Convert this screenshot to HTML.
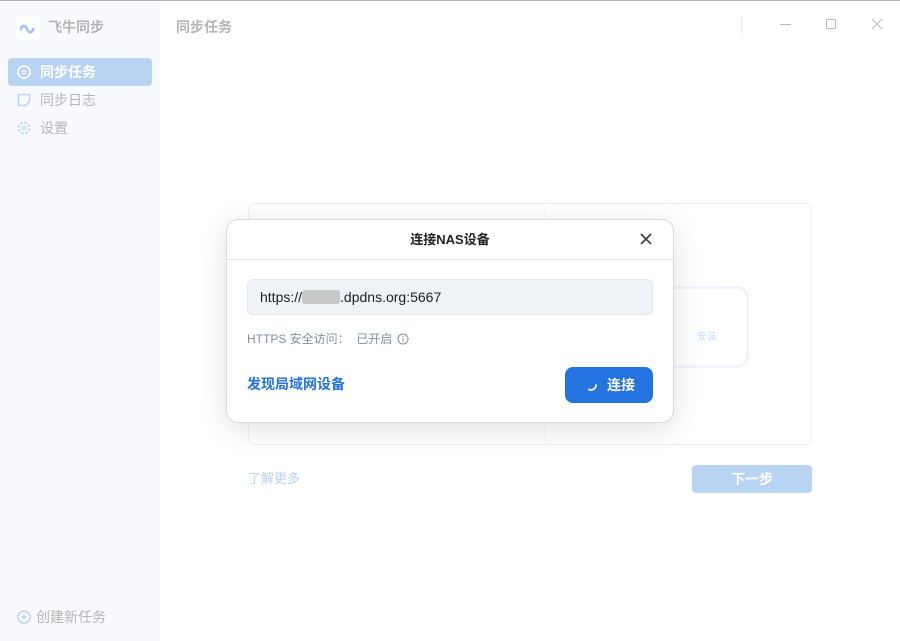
<!DOCTYPE html>
<html><head><meta charset="utf-8"><style>
*{box-sizing:border-box;margin:0;padding:0}
body{width:900px;height:640px;position:relative;overflow:hidden;background:#fff;font-family:"Liberation Sans","Noto Sans CJK SC",sans-serif;border-top:1px solid #b4b4b4}
.sb{position:absolute;left:0;top:1px;width:160px;height:639px;background:#f9fafd}
.logo{position:absolute;left:16px;top:14px;width:24px;height:24px;border-radius:5px;background:#fff}
.t{position:absolute;font-size:14px;color:#b5b5b5;line-height:16px}
.nav{position:absolute;left:8px;top:56px;width:144px;height:28px;border-radius:4px;background:#b9d3f3}
.card{position:absolute;left:248px;top:202px;width:564px;height:242px;border:1px solid #eef0f3;border-radius:6px}
.modal{position:absolute;left:226px;top:218px;width:448px;height:204px;background:#fff;border:1px solid #d8dadf;border-radius:12px;box-shadow:0 6px 30px rgba(0,0,0,.12)}
</style></head><body>
<div class="sb">
<div class="logo"><svg width="24" height="24" viewBox="0 0 24 24"><path d="M5 13c0-4 5-4 6 0s6 4 6 0" stroke="#a9c8f0" stroke-width="3" fill="none" stroke-linecap="round"/></svg></div>
<div class="t" style="left:48px;top:17px;font-weight:bold">飞牛同步</div>
<div class="nav"></div>
<svg style="position:absolute;left:17px;top:63px" width="14" height="14"><circle cx="7" cy="7" r="6" stroke="#fff" stroke-width="1.5" fill="none"/><path d="M4.5 6h5M4.5 8.5h5" stroke="#fff" stroke-width="1.2"/></svg>
<div class="t" style="left:40px;top:62px;color:#fff;font-weight:bold">同步任务</div>
<svg style="position:absolute;left:17px;top:91px" width="14" height="14"><path d="M1.5 1.5h11v7l-4 4h-7z" stroke="#b9d3f3" stroke-width="1.5" fill="none"/></svg>
<div class="t" style="left:40px;top:90px">同步日志</div>
<svg style="position:absolute;left:17px;top:119px" width="14" height="14"><circle cx="7" cy="7" r="5.5" stroke="#b9d3f3" stroke-width="1.5" fill="none" stroke-dasharray="3 1.3"/><circle cx="7" cy="7" r="2" stroke="#b9d3f3" stroke-width="1.3" fill="none"/></svg>
<div class="t" style="left:40px;top:118px">设置</div>
<svg style="position:absolute;left:17px;top:608px" width="14" height="14"><circle cx="7" cy="7" r="6" stroke="#b9d3f3" stroke-width="1.5" fill="none"/><path d="M4 7h6M7 4v6" stroke="#b9d3f3" stroke-width="1.3"/></svg>
<div class="t" style="left:36px;top:607px">创建新任务</div>
</div>
<div class="t" style="left:176px;top:18px;font-weight:bold">同步任务</div>
<div style="position:absolute;left:741px;top:14px;width:1px;height:19px;background:#eee"></div>
<div style="position:absolute;left:780px;top:23px;width:11px;height:1px;background:#bbb"></div>
<div style="position:absolute;left:826px;top:18px;width:10px;height:10px;border:1px solid #bbb;border-radius:1px"></div>
<svg style="position:absolute;left:871px;top:17px" width="12" height="12"><path d="M1 1l10 10M11 1L1 11" stroke="#bbb"/></svg>
<div class="card">
<div style="position:absolute;left:295px;top:0;width:1px;height:240px;background:#f7f7f7"></div>
<div style="position:absolute;left:400px;top:82px;width:100px;height:82px;border:3px solid #f6f2fd;border-radius:12px"></div>
<div style="position:absolute;left:448px;top:124px;width:40px;height:20px;font-size:10px;color:#c5daf5">安装</div>
</div>
<div style="position:absolute;left:248px;top:470px;font-size:13px;color:#b9d3f3;line-height:16px">了解更多</div>
<div style="position:absolute;left:692px;top:464px;width:120px;height:28px;background:#b9d3f3;border-radius:4px;color:#fff;font-size:14px;font-weight:bold;text-align:center;line-height:28px">下一步</div>
<div class="modal">
<div style="position:absolute;left:0;top:12px;width:100%;text-align:center;font-size:13px;font-weight:bold;color:#222;line-height:16px">连接NAS设备</div>
<svg style="position:absolute;left:413px;top:13px" width="12" height="12"><path d="M1 1l10 10M11 1L1 11" stroke="#444" stroke-width="1.8"/></svg>
<div style="position:absolute;left:0;top:39px;width:100%;height:1px;background:#e6e8ec"></div>
<div style="position:absolute;left:20px;top:59px;width:406px;height:36px;background:#eff2f7;border:1px solid #e3e7ee;border-radius:6px;font-size:14px;color:#222;line-height:34px;padding-left:12px">https://<span style="display:inline-block;width:38px;height:14px;background:#c8c8c8;vertical-align:-2px;border-radius:3px"></span>.dpdns.org:5667</div>
<div style="position:absolute;left:20px;top:112px;font-size:12px;color:#8590a0;line-height:14px">HTTPS 安全访问： &nbsp;已开启</div>
<svg style="position:absolute;left:170px;top:113px" width="12" height="12"><circle cx="6" cy="6" r="5" stroke="#8590a0" fill="none"/><path d="M6 5v4M6 3v1" stroke="#8590a0"/></svg>
<div style="position:absolute;left:20px;top:156px;font-size:14px;font-weight:bold;color:#2473de;line-height:16px">发现局域网设备</div>
<div style="position:absolute;left:338px;top:147px;width:88px;height:36px;background:#2373e0;border-radius:8px;color:#fff;font-size:14px;font-weight:bold;line-height:36px;padding-left:42px">连接</div>
<svg style="position:absolute;left:358px;top:158px" width="14" height="14"><path d="M11 7a5 5 0 0 1-7 4.5" stroke="#fff" stroke-width="1.8" fill="none" stroke-linecap="round"/></svg>
</div>
</body></html>
